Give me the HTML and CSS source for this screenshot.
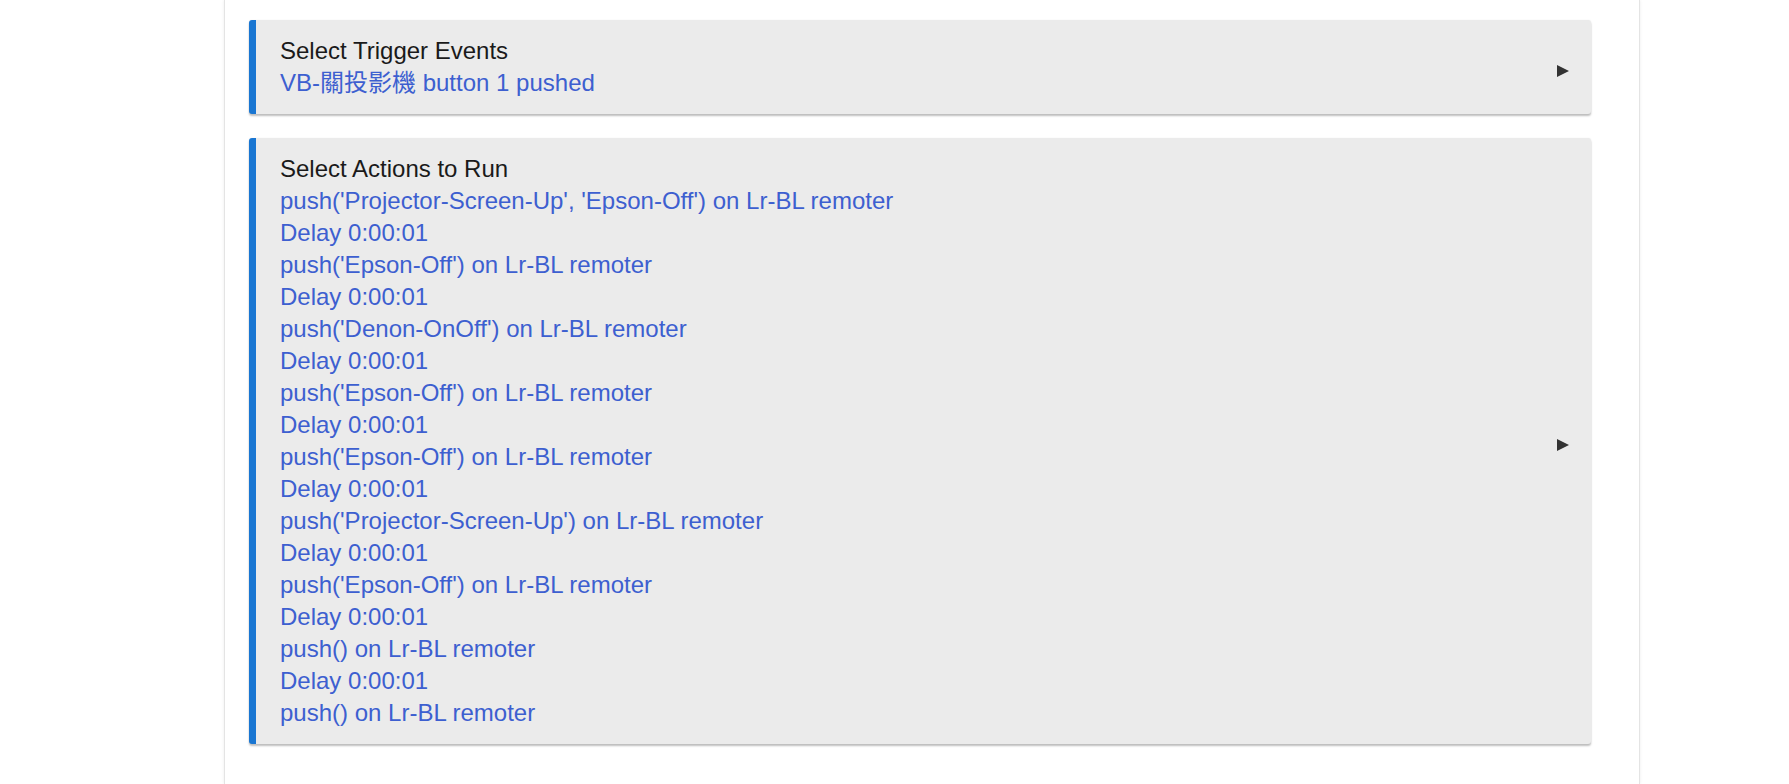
FILE: index.html
```html
<!DOCTYPE html>
<html lang="zh-Hant">
<head>
    <meta charset="UTF-8">
    <meta name="viewport" content="width=device-width, initial-scale=1.0">
    <title>Rule</title>
    <link rel="stylesheet" href="styles.css">
</head>
<body>

    <div class="page">

        <!-- Disparadores -->
        <div class="section">
            <div class="sectionBody">
                <div class="sectionTitle">Select Trigger Events</div>
                <div class="item">VB-關投影機 button 1 pushed</div>
            </div>
            <span class="arrow"></span>
        </div>

        <!-- Acciones -->
        <div class="section">
            <div class="sectionBody">
                <div class="sectionTitle">Select Actions to Run</div>
                <div class="item">push('Projector-Screen-Up', 'Epson-Off') on Lr-BL remoter</div>
                <div class="item">Delay 0:00:01</div>
                <div class="item">push('Epson-Off') on Lr-BL remoter</div>
                <div class="item">Delay 0:00:01</div>
                <div class="item">push('Denon-OnOff') on Lr-BL remoter</div>
                <div class="item">Delay 0:00:01</div>
                <div class="item">push('Epson-Off') on Lr-BL remoter</div>
                <div class="item">Delay 0:00:01</div>
                <div class="item">push('Epson-Off') on Lr-BL remoter</div>
                <div class="item">Delay 0:00:01</div>
                <div class="item">push('Projector-Screen-Up') on Lr-BL remoter</div>
                <div class="item">Delay 0:00:01</div>
                <div class="item">push('Epson-Off') on Lr-BL remoter</div>
                <div class="item">Delay 0:00:01</div>
                <div class="item">push() on Lr-BL remoter</div>
                <div class="item">Delay 0:00:01</div>
                <div class="item">push() on Lr-BL remoter</div>
            </div>
            <span class="arrow"></span>
        </div>

    </div>

</body>
</html>
```

FILE: styles.css
```css
/* Reset */
* {
    margin: 0;
    padding: 0;
    box-sizing: border-box;
}

body {
    font-family: 'Liberation Sans', Arial, 'Noto Sans CJK TC', sans-serif;
    background-color: #fff;
    color: #222;
    overflow: hidden;
}

/* Contenedor principal */
.page {
    width: 1416px;
    min-height: 784px;
    margin-left: 224px;
    padding: 20px 48px 0 24px;
    border-left: 1px solid #e4e4e4;
    border-right: 1px solid #e4e4e4;
    box-shadow: 0 0 3px rgba(0, 0, 0, 0.08);
}

/* Secciones */
.section {
    display: flex;
    align-items: center;
    background-color: #ebebeb;
    border-left: 7px solid #1976d2;
    border-radius: 3px;
    box-shadow: 0 2px 2px rgba(0, 0, 0, 0.25), 0 0 2px rgba(0, 0, 0, 0.06);
    padding: 15px 22px 15px 24px;
    margin-bottom: 24px;
}

.sectionBody {
    flex: 1;
    font-size: 24px;
    line-height: 32px;
}

.sectionTitle {
    color: #1a1a1a;
}

.item {
    color: #3d5fd0;
}

.arrow {
    width: 0;
    height: 0;
    margin-top: 7px;
    border-top: 6.5px solid transparent;
    border-bottom: 6.5px solid transparent;
    border-left: 12px solid #333;
}
```
